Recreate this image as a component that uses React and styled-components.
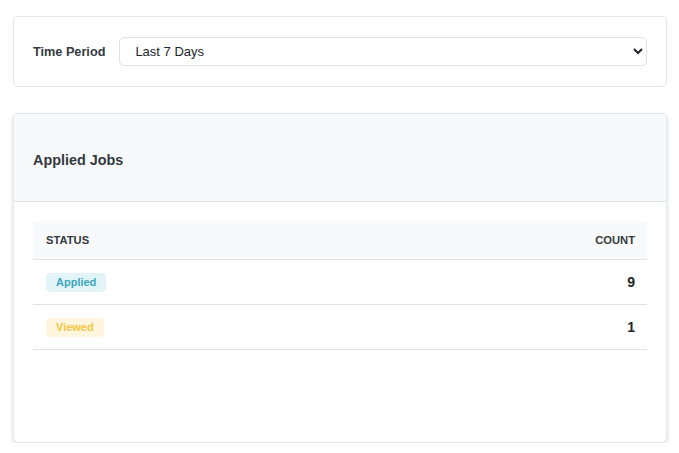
import React, { useState } from "react";
import styled, { createGlobalStyle } from "styled-components";

const GlobalStyle = createGlobalStyle`
    body {
        margin: 0;
        background: #fff;
        font-family: "Liberation Sans", Arial, sans-serif;
        color: #343a40;
    }
`;

const Page = styled.div`
    display: flex;
    flex-direction: column;
    gap: 26px;
    padding: 16px 12px 0 13px;
`;

const FilterCard = styled.div`
    display: flex;
    align-items: center;
    gap: 14px;
    padding: 20px 19px;
    border: 1px solid #e3e6ea;
    border-radius: 5px;
    background: #fff;
`;

const Label = styled.label`
    font-size: 12.7px;
    font-weight: 700;
    color: #343a40;
    white-space: nowrap;
`;

const Select = styled.select`
    flex: 1;
    height: 29px;
    padding: 0 8px 0 11px;
    border: 1px solid #dee2e6;
    border-radius: 5px;
    background-color: #fff;
    font-family: "Liberation Sans", Arial, sans-serif;
    font-size: 13px;
    color: #212529;
    outline: none;
`;

const Card = styled.div`
    display: flex;
    flex-direction: column;
    border: 1px solid #e3e6ea;
    border-radius: 5px;
    background: #fff;
    box-shadow: 0 2px 5px rgba(0, 0, 0, 0.14);
    overflow: hidden;
`;

const CardHeader = styled.div`
    display: flex;
    align-items: center;
    height: 88px;
    padding: 5px 19px 0;
    box-sizing: border-box;
    background: #f8f9fa;
    border-bottom: 1px solid #dee2e6;
`;

const Title = styled.h3`
    margin: 0;
    font-size: 14.4px;
    font-weight: 700;
    color: #343a40;
`;

const CardBody = styled.div`
    min-height: 221px;
    padding: 19px 19px 0;
`;

const Table = styled.table`
    width: 100%;
    border-collapse: collapse;
`;

const Th = styled.th`
    height: 38px;
    padding: 0 12px 0 13px;
    background: #f8f9fa;
    border-bottom: 1px solid #dee2e6;
    font-size: 11.2px;
    font-weight: 700;
    text-transform: uppercase;
    text-align: ${props => props.align || "left"};
    color: #343a40;
`;

const Td = styled.td`
    height: 44px;
    padding: 0 12px 0 13px;
    border-bottom: 1px solid #dee2e6;
    text-align: ${props => props.align || "left"};
`;

const Count = styled.span`
    font-size: 14px;
    font-weight: 700;
    color: #212529;
`;

const Badge = styled.span`
    display: inline-block;
    padding: 4px 10px;
    border-radius: 4px;
    font-size: 11px;
    font-weight: 700;
    line-height: 11px;
    background: ${props => props.bg};
    color: ${props => props.fg};
`;

const statusColors = {
    Applied: { bg: "#e2f4f7", fg: "#3aa7bd" },
    Viewed: { bg: "#fff6dd", fg: "#f6c544" },
};

const rows = [
    { status: "Applied", count: 9 },
    { status: "Viewed", count: 1 },
];

const App = () => {
    const [period, setPeriod] = useState("7");

    return (
        <>
            <GlobalStyle />
            <Page>
                <FilterCard>
                    <Label htmlFor="period">Time Period</Label>
                    <Select id="period" value={period} onChange={e => setPeriod(e.target.value)}>
                        <option value="7">Last 7 Days</option>
                        <option value="30">Last 30 Days</option>
                        <option value="90">Last 90 Days</option>
                    </Select>
                </FilterCard>

                <Card>
                    <CardHeader>
                        <Title>Applied Jobs</Title>
                    </CardHeader>
                    <CardBody>
                        <Table>
                            <thead>
                                <tr>
                                    <Th>Status</Th>
                                    <Th align="right">Count</Th>
                                </tr>
                            </thead>
                            <tbody>
                                {rows.map(row => (
                                    <tr key={row.status}>
                                        <Td>
                                            <Badge bg={statusColors[row.status].bg} fg={statusColors[row.status].fg}>
                                                {row.status}
                                            </Badge>
                                        </Td>
                                        <Td align="right">
                                            <Count>{row.count}</Count>
                                        </Td>
                                    </tr>
                                ))}
                            </tbody>
                        </Table>
                    </CardBody>
                </Card>
            </Page>
        </>
    );
};

export default App;
